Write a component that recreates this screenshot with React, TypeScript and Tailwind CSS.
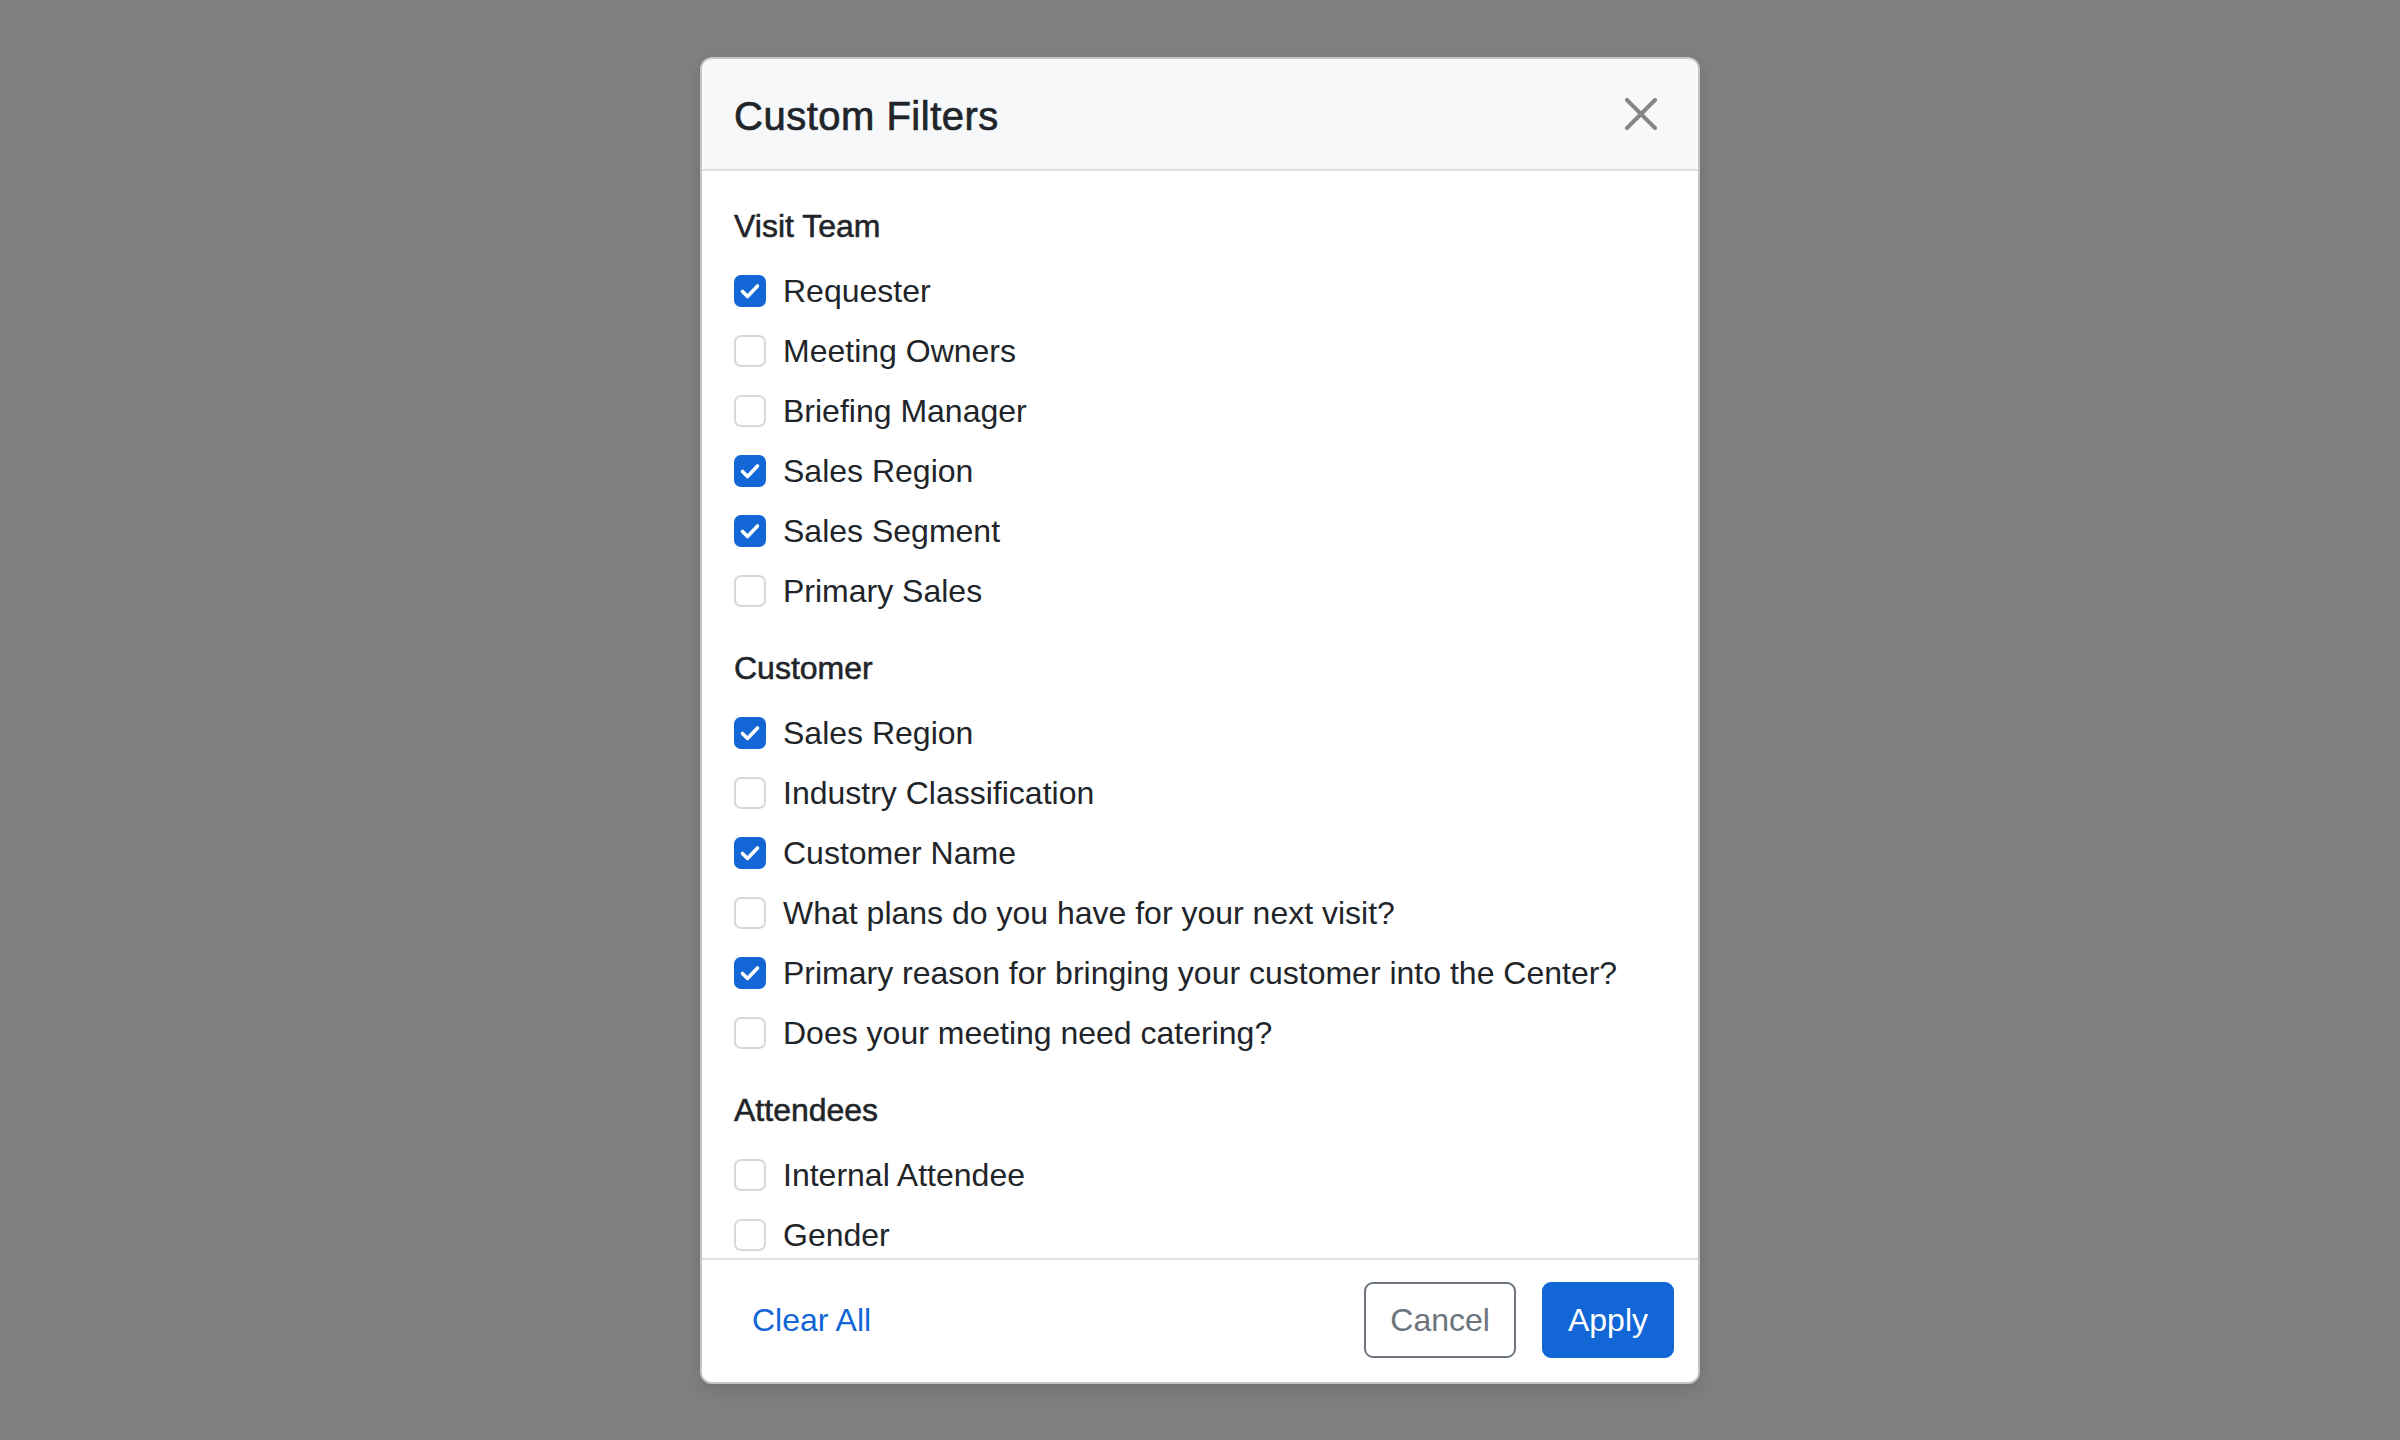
import React, { useState } from "react";

type Section = {
  title: string;
  items: { label: string; checked: boolean }[];
};

const SECTIONS: Section[] = [
  {
    title: "Visit Team",
    items: [
      { label: "Requester", checked: true },
      { label: "Meeting Owners", checked: false },
      { label: "Briefing Manager", checked: false },
      { label: "Sales Region", checked: true },
      { label: "Sales Segment", checked: true },
      { label: "Primary Sales", checked: false },
    ],
  },
  {
    title: "Customer",
    items: [
      { label: "Sales Region", checked: true },
      { label: "Industry Classification", checked: false },
      { label: "Customer Name", checked: true },
      { label: "What plans do you have for your next visit?", checked: false },
      { label: "Primary reason for bringing your customer into the Center?", checked: true },
      { label: "Does your meeting need catering?", checked: false },
    ],
  },
  {
    title: "Attendees",
    items: [
      { label: "Internal Attendee", checked: false },
      { label: "Gender", checked: false },
    ],
  },
];

const CheckBox = ({ checked }: { checked: boolean }) =>
  checked ? (
    <span className="flex h-8 w-8 shrink-0 items-center justify-center rounded-[7px] bg-[#1366d6]">
      <svg width="32" height="32" viewBox="0 0 32 32" fill="none">
        <path
          d="M8.5 16.5l5 5 10-10.5"
          stroke="white"
          strokeWidth="3.6"
          strokeLinecap="round"
          strokeLinejoin="round"
        />
      </svg>
    </span>
  ) : (
    <span className="h-8 w-8 shrink-0 rounded-[7px] border-2 border-[#d6d9dc] bg-white" />
  );

export default function App() {
  const [sections, setSections] = useState(SECTIONS);

  const toggle = (si: number, ii: number) => {
    setSections((prev) =>
      prev.map((s, i) =>
        i !== si
          ? s
          : {
              ...s,
              items: s.items.map((it, j) => (j === ii ? { ...it, checked: !it.checked } : it)),
            }
      )
    );
  };

  return (
    <div className="flex h-screen w-full items-center justify-center bg-[#808080] font-['Liberation_Sans',Arial,sans-serif] text-[#212529]">
      <div className="relative flex w-[1000px] flex-col overflow-hidden rounded-[12px] border-2 border-[#c4c4c4] bg-white shadow-[0_6px_20px_rgba(0,0,0,0.12)]">
        {/* Header */}
        <div className="flex h-[112px] items-center justify-between border-b-2 border-[#dee2e6] bg-[#f7f8fa] pl-8 pr-[41px]">
          <h5 className="pt-1 text-[40px] leading-[48px] tracking-[0.5px] [-webkit-text-stroke:0.7px_#212529]">
            Custom Filters
          </h5>
          <svg width="32" height="32" viewBox="0 0 32 32" fill="none">
            <path
              d="M2 2l28 28M30 2L2 30"
              stroke="#868686"
              strokeWidth="4"
              strokeLinecap="round"
            />
          </svg>
        </div>

        {/* Body */}
        <div className="h-[1087px] overflow-hidden px-8 pt-[31px]">
          {sections.map((section, si) => (
            <div key={section.title} className="mb-[29px]">
              <div className="mb-[17px] text-[32px] leading-[48px] [-webkit-text-stroke:0.55px_#212529]">
                {section.title}
              </div>
              <div className="flex flex-col gap-3">
                {section.items.map((item, ii) => (
                  <label
                    key={item.label}
                    onClick={() => toggle(si, ii)}
                    className="flex h-12 cursor-pointer items-center gap-[17px] text-[32px] leading-[48px]"
                  >
                    <CheckBox checked={item.checked} />
                    <span>{item.label}</span>
                  </label>
                ))}
              </div>
            </div>
          ))}
        </div>

        {/* Footer */}
        <div className="flex items-center justify-between border-t-2 border-[#dee2e6] bg-white pb-6 pl-6 pr-6 pt-[22px]">
          <button className="h-[76px] border-2 border-transparent px-6 text-[32px] leading-[48px] text-[#1366d6]">
            Clear All
          </button>
          <div className="flex items-center gap-[26px]">
            <button className="h-[76px] rounded-[9px] border-2 border-[#6c757d] bg-white px-6 text-[32px] leading-[48px] text-[#6c757d]">
              Cancel
            </button>
            <button className="h-[76px] rounded-[9px] border-2 border-[#1366d6] bg-[#1366d6] px-6 text-[32px] leading-[48px] text-white">
              Apply
            </button>
          </div>
        </div>
      </div>
    </div>
  );
}
